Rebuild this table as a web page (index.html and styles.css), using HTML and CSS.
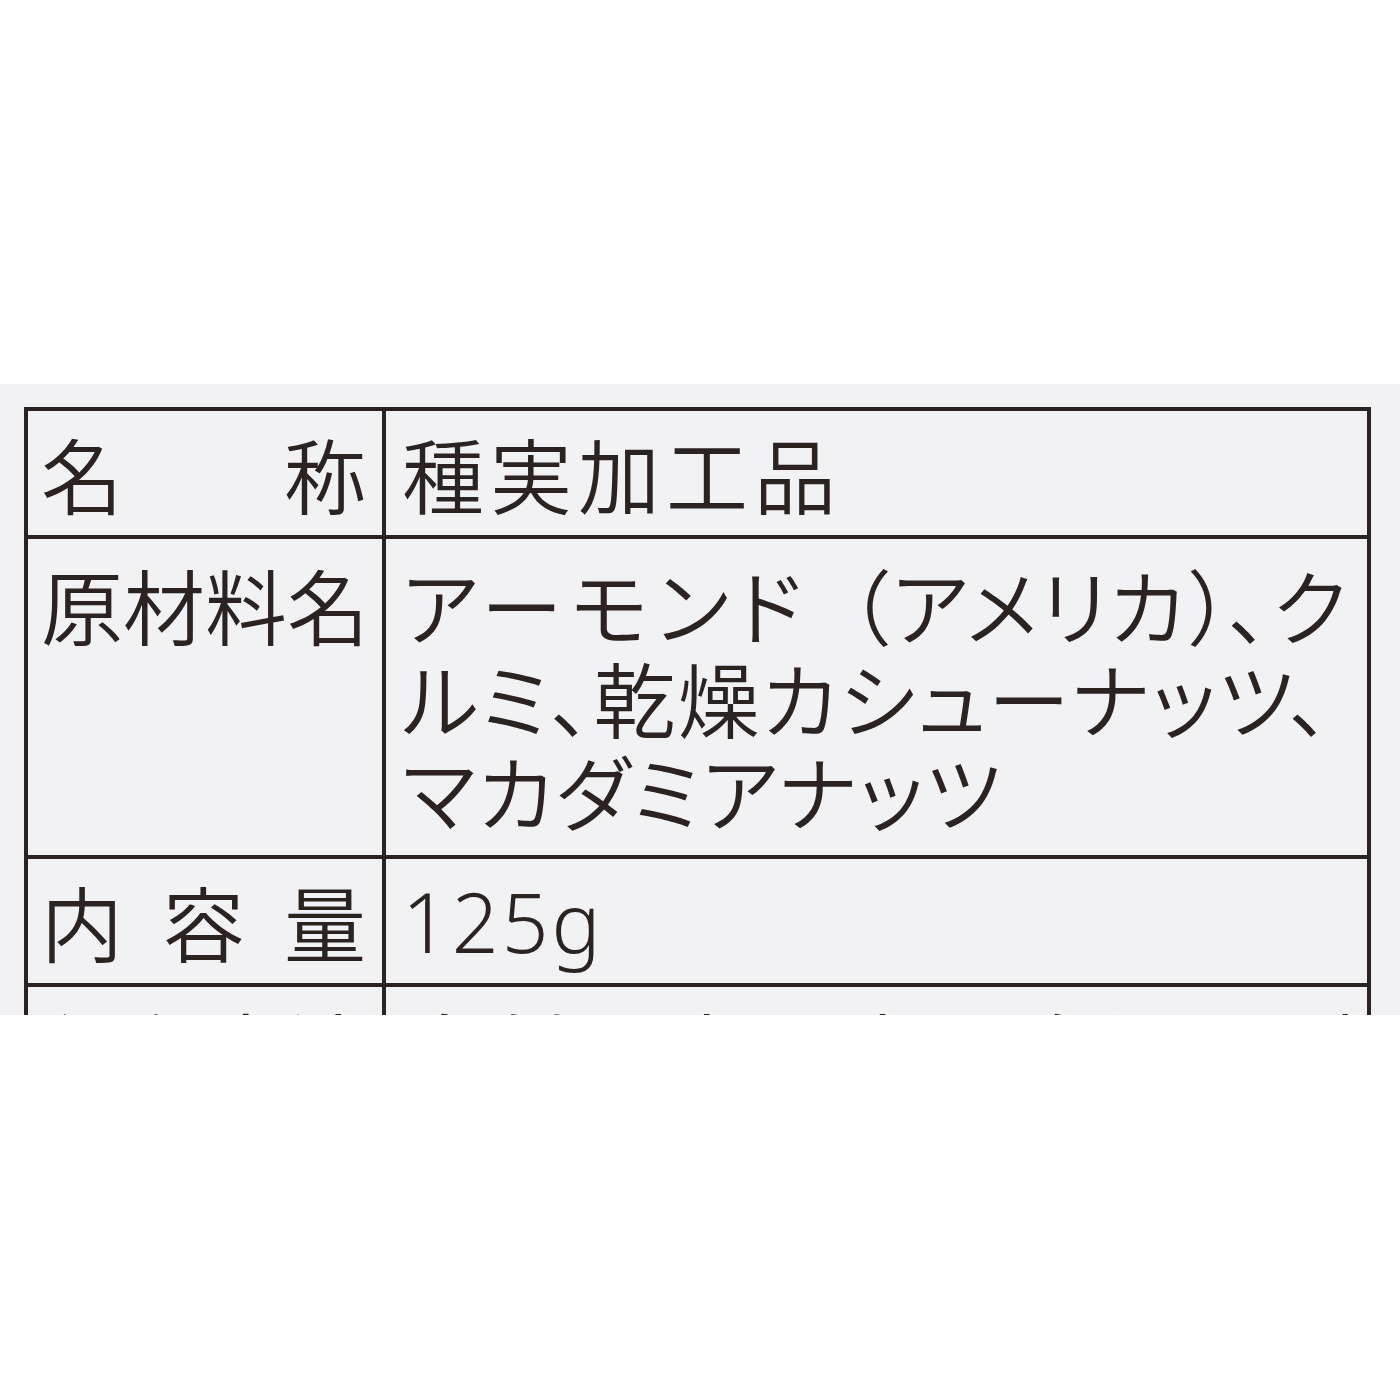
FILE: index.html
```html
<!DOCTYPE html>
<html lang="ja">
<head>
<meta charset="utf-8">
<title>食品表示</title>
<link rel="stylesheet" href="styles.css">
</head>
<body>
<div class="top-space"></div>
<section class="panel">
  <div class="label-table">
    <div class="cell label"><span>名</span><span>称</span></div>
    <div class="cell value">種実加工品</div>

    <div class="cell label tall"><span>原</span><span>材</span><span>料</span><span>名</span></div>
    <div class="cell value tall multi"><span class="wide">アーモンド</span><span class="paren">（</span>アメリカ<span class="paren">）</span><span class="comma">、</span>ク<br>ルミ、乾燥カシューナッツ、<br>マカダミアナッツ</div>

    <div class="cell label"><span>内</span><span>容</span><span>量</span></div>
    <div class="cell value num">125g</div>

    <div class="cell label last"><span>保</span><span>存</span><span>方</span><span>法</span></div>
    <div class="cell value last">直射日光、高温多湿を避けて保存</div>
  </div>
</section>
<div class="bottom-space"></div>
</body>
</html>
```
FILE: styles.css
```css
html, body {
  margin: 0;
  padding: 0;
  background: #ffffff;
}
body {
  width: 1400px;
  font-family: "Noto Sans CJK JP", "Noto Sans", sans-serif;
  color: #2a2321;
}
.top-space {
  height: 384px;
  background: #ffffff;
}
.panel {
  height: 631px;
  overflow: hidden;
  background: #f2f2f5;
  padding: 23px 29px 0 24px;
  box-sizing: border-box;
}
.bottom-space {
  height: 385px;
  background: #ffffff;
}
.label-table {
  display: grid;
  grid-template-columns: 358px minmax(0, 1fr);
  border-top: 4px solid #2a2321;
  border-left: 4px solid #2a2321;
}
.cell {
  border-right: 4px solid #2a2321;
  border-bottom: 4px solid #2a2321;
  height: 124px;
  box-sizing: content-box;
  font-size: 82px;
  font-weight: 350;
  line-height: 124px;
  white-space: nowrap;
  overflow: hidden;
}
.label {
  display: flex;
  justify-content: space-between;
  padding: 0 16px 0 13px;
}
.value {
  padding: 0 0 0 16px;
  letter-spacing: 6px;
}
.tall {
  height: 316px;
}
.label.tall {
  align-items: flex-start;
  padding-top: 18px;
  height: 298px;
  line-height: 93px;
}
.value.multi {
  padding-top: 18px;
  height: 298px;
  line-height: 93px;
  letter-spacing: 2px;
  font-feature-settings: "palt" 1;
}
.value.multi .wide {
  letter-spacing: 8px;
}
.value.multi .paren {
  font-feature-settings: normal;
  letter-spacing: 0;
}
.value.multi .comma {
  letter-spacing: 4px;
}
.value.num {
  font-family: "Noto Sans", "Noto Sans CJK JP", sans-serif;
  letter-spacing: 3px;
}
.cell.last {
  line-height: 121px;
}
```
